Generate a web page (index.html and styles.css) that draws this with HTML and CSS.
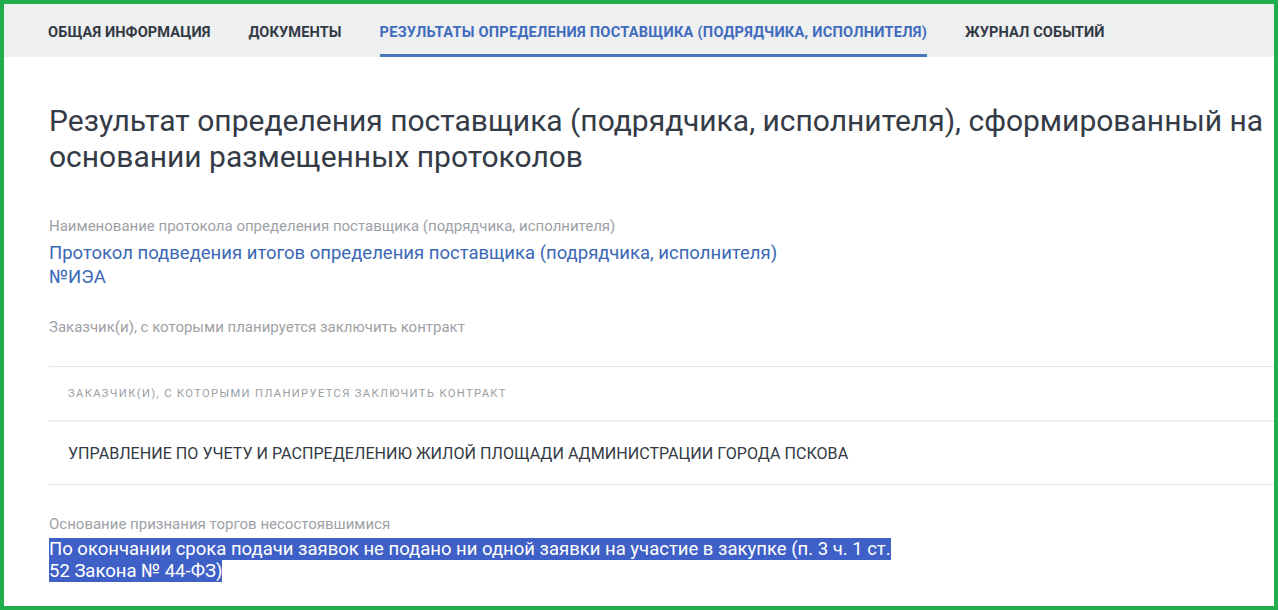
FILE: index.html
```html
<!DOCTYPE html>
<html lang="ru">
<head>
<meta charset="utf-8">
<title>Результаты</title>
<link rel="stylesheet" href="styles.css">
</head>
<body>
<div class="frame">
  <nav class="tabs">
    <a class="tab">Общая информация</a>
    <a class="tab">Документы</a>
    <a class="tab active">Результаты определения поставщика (подрядчика, исполнителя)</a>
    <a class="tab">Журнал событий</a>
  </nav>
  <main class="content">
    <h1 class="title">Результат определения поставщика (подрядчика, исполнителя), сформированный на основании размещенных протоколов</h1>

    <section class="field">
      <div class="label">Наименование протокола определения поставщика (подрядчика, исполнителя)</div>
      <div class="link">Протокол подведения итогов определения поставщика (подрядчика, исполнителя)<br>№ИЭА</div>
    </section>

    <section class="field">
      <div class="label">Заказчик(и), с которыми планируется заключить контракт</div>
    </section>

    <div class="table">
      <div class="thead">Заказчик(и), с которыми планируется заключить контракт</div>
      <div class="trow">УПРАВЛЕНИЕ ПО УЧЕТУ И РАСПРЕДЕЛЕНИЮ ЖИЛОЙ ПЛОЩАДИ АДМИНИСТРАЦИИ ГОРОДА ПСКОВА</div>
    </div>

    <section class="field last">
      <div class="label">Основание признания торгов несостоявшимися</div>
      <div class="value"><span class="sel">По окончании срока подачи заявок не подано ни одной заявки на участие в закупке (п. 3 ч. 1 ст.<br>52 Закона № 44-ФЗ)</span></div>
    </section>
  </main>
</div>
</body>
</html>
```

FILE: styles.css
```css
html, body {
  margin: 0;
  padding: 0;
  background: #ffffff;
}
body {
  font-family: Roboto, "Liberation Sans", sans-serif;
  color: #333a44;
}
.frame {
  box-sizing: border-box;
  width: 1278px;
  height: 610px;
  border: 4px solid #22ad4c;
  overflow: hidden;
  background: #fff;
}
.tabs {
  display: flex;
  gap: 38px;
  height: 53px;
  padding-left: 44px;
  background: #eeeff1;
  align-items: stretch;
}
.tab {
  display: flex;
  align-items: center;
  font-size: 14.6px;
  font-weight: 700;
  text-transform: uppercase;
  color: #333a44;
  letter-spacing: 0.1px;
  border-bottom: 3px solid transparent;
  padding-top: 5px;
  box-sizing: border-box;
}
.tab.active {
  color: #3f6cbc;
  border-bottom-color: #4a76bb;
  letter-spacing: 0.24px;
}
.content {
  padding: 46px 0 0 45px;
}
.title {
  margin: 0;
  font-size: 30px;
  font-weight: 400;
  line-height: 36px;
  color: #343b46;
}
.field {
  margin-top: 41px;
}
.label {
  font-size: 15px;
  color: #9da1a7;
  line-height: 20px;
}
.link {
  margin-top: 5px;
  font-size: 18.5px;
  line-height: 24px;
  color: #3a68b5;
}
.field + .field {
  margin-top: 28px;
}
.table {
  margin-top: 29px;
  border-top: 1px solid #e6e7e9;
}
.thead {
  padding: 0 19px;
  height: 53px;
  display: flex;
  align-items: center;
  font-size: 11.2px;
  letter-spacing: 1.35px;
  text-transform: uppercase;
  color: #9a9ea4;
  border-bottom: 2px solid #eceef0;
}
.trow {
  padding: 0 19px;
  height: 62px;
  display: flex;
  align-items: center;
  font-size: 16.1px;
  color: #333a44;
  border-bottom: 1px solid #e6e7e9;
}
.field.last {
  margin-top: 29px;
}
.value {
  margin-top: 4px;
  font-size: 18.5px;
  line-height: 22px;
}
.sel {
  background: #3f60c6;
  color: #ffffff;
}
```
